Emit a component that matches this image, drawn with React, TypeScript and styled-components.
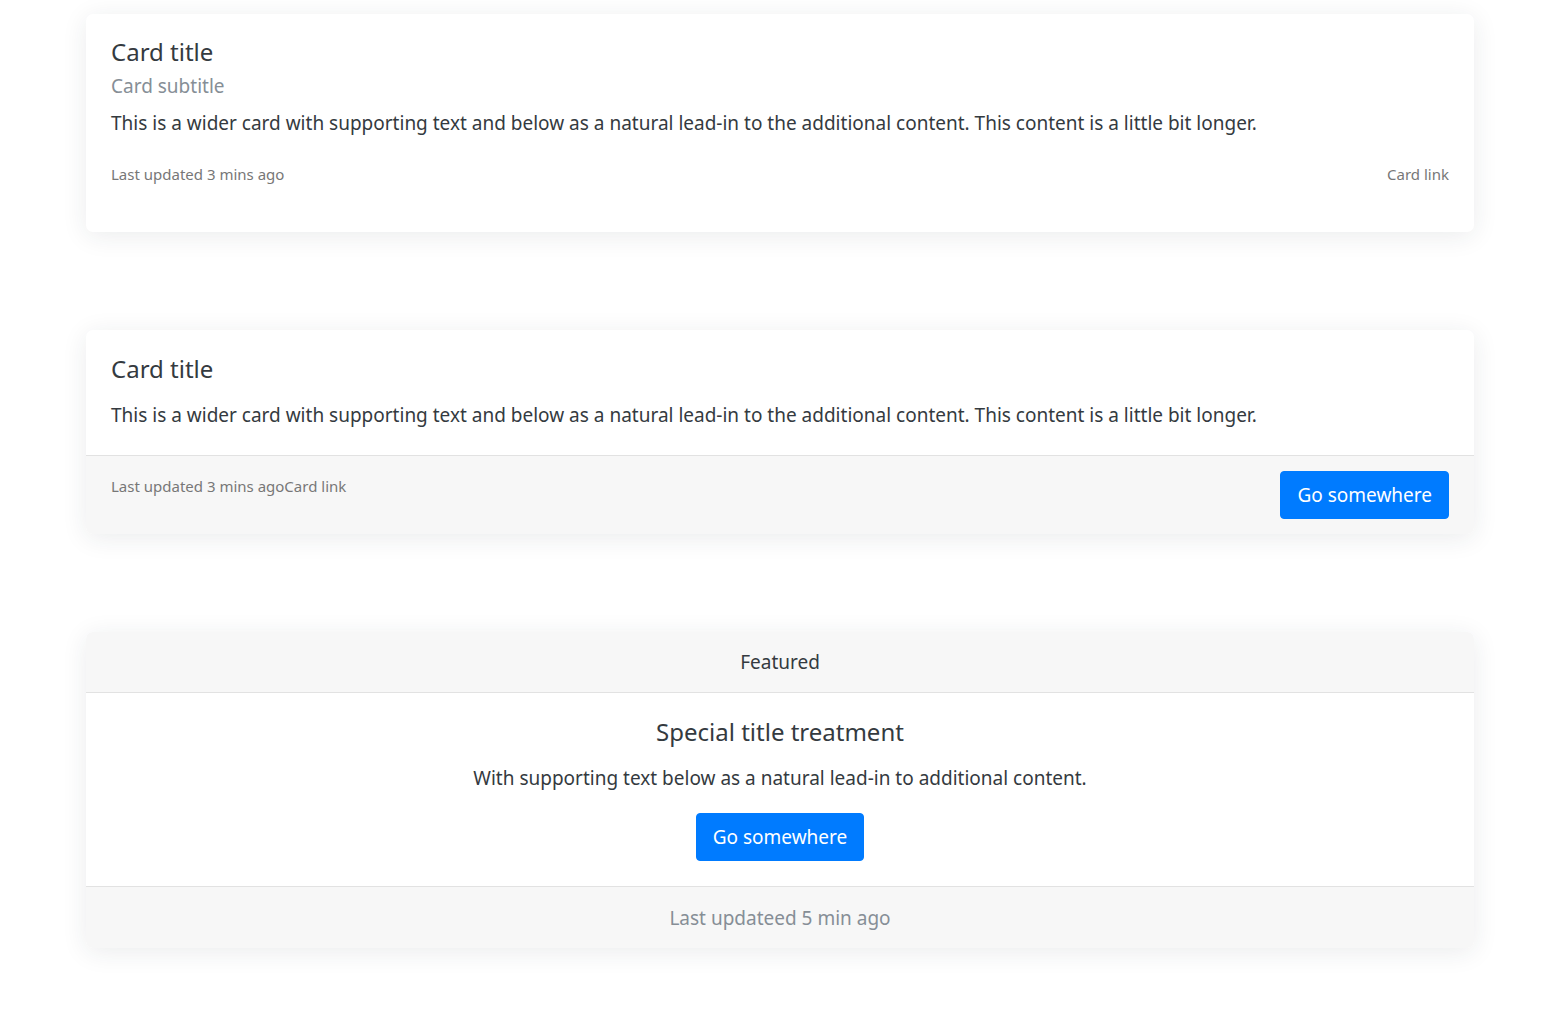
import React from "react";
import styled, { createGlobalStyle } from "styled-components";

const Global = createGlobalStyle`
  html, body { margin: 0; padding: 0; background: #ffffff; }
  body { font-family: "Noto Sans", "Open Sans", sans-serif; color: #343a40; }
`;

const Page = styled.div`
  display: flex;
  flex-direction: column;
  gap: 98px;
  padding: 14px 93px 60px 86px;
`;

const Card = styled.div`
  background: #fff;
  border-radius: 7px;
  box-shadow: 0 4px 26px rgba(30, 40, 60, 0.09);
  overflow: hidden;
  display: flex;
  flex-direction: column;
`;

const Body = styled.div<{ $center?: boolean; $bottom?: number }>`
  padding: 22px 25px ${(p) => p.$bottom ?? 20}px;
  display: flex;
  flex-direction: column;
  align-items: ${(p) => (p.$center ? "center" : "stretch")};
  text-align: ${(p) => (p.$center ? "center" : "left")};
`;

const Title = styled.h5<{ $top?: number }>`
  margin: ${(p) => p.$top ?? 0}px 0 0;
  font-size: 24px;
  font-weight: 400;
  line-height: 32px;
  color: #343a40;
`;

const Subtitle = styled.h6`
  margin: 2px 0 0;
  font-size: 19px;
  font-weight: 400;
  line-height: 32px;
  color: #868e96;
`;

const Text = styled.p<{ $top?: number }>`
  margin: ${(p) => p.$top ?? 6}px 0 0;
  font-size: 19px;
  line-height: 30px;
  color: #343a40;
`;

const MetaRow = styled.div`
  display: flex;
  justify-content: space-between;
  margin-top: 26px;
  padding-bottom: 28px;
`;

const Small = styled.span`
  font-size: 15px;
  line-height: 20px;
  color: #777;
`;

const Footer = styled.div<{ $center?: boolean }>`
  background: #f7f7f7;
  border-top: 1px solid #e2e2e2;
  display: flex;
  align-items: ${(p) => (p.$center ? "center" : "flex-start")};
  justify-content: ${(p) => (p.$center ? "center" : "space-between")};
  padding: ${(p) => (p.$center ? "0 25px" : "15px 25px 15px")};
  height: ${(p) => (p.$center ? "61px" : "auto")};
`;

const FooterText = styled.span`
  font-size: 15px;
  line-height: 30px;
  color: #777;
`;

const CenterFoot = styled.span`
  font-size: 19px;
  color: #868e96;
`;

const Header = styled.div`
  background: #f7f7f7;
  border-bottom: 1px solid #e2e2e2;
  height: 60px;
  display: flex;
  align-items: center;
  justify-content: center;
  font-size: 19px;
  color: #343a40;
`;

const Button = styled.button`
  font-family: inherit;
  font-size: 19px;
  color: #fff;
  background: #007bff;
  border: 1px solid #007bff;
  border-radius: 4px;
  height: 48px;
  padding: 0 16px;
  cursor: pointer;
`;

const CenterButton = styled(Button)`
  margin-top: 20px;
  margin-bottom: 5px;
`;

const text =
  "This is a wider card with supporting text and below as a natural lead-in to the additional content. This content is a little bit longer.";

export default function App() {
  return (
    <>
      <Global />
      <Page>
        <Card>
          <Body>
            <Title>Card title</Title>
            <Subtitle>Card subtitle</Subtitle>
            <Text>{text}</Text>
            <MetaRow>
              <Small>Last updated 3 mins ago</Small>
              <Small>Card link</Small>
            </MetaRow>
          </Body>
        </Card>
        <Card>
          <Body $bottom={25}>
            <Title $top={1}>Card title</Title>
            <Text $top={15}>{text}</Text>
          </Body>
          <Footer>
            <FooterText>Last updated 3 mins agoCard link</FooterText>
            <Button>Go somewhere</Button>
          </Footer>
        </Card>
        <Card>
          <Header>Featured</Header>
          <Body $center>
            <Title $top={1}>Special title treatment</Title>
            <Text $top={15}>With supporting text below as a natural lead-in to additional content.</Text>
            <CenterButton>Go somewhere</CenterButton>
          </Body>
          <Footer $center>
            <CenterFoot>Last updateed 5 min ago</CenterFoot>
          </Footer>
        </Card>
      </Page>
    </>
  );
}
